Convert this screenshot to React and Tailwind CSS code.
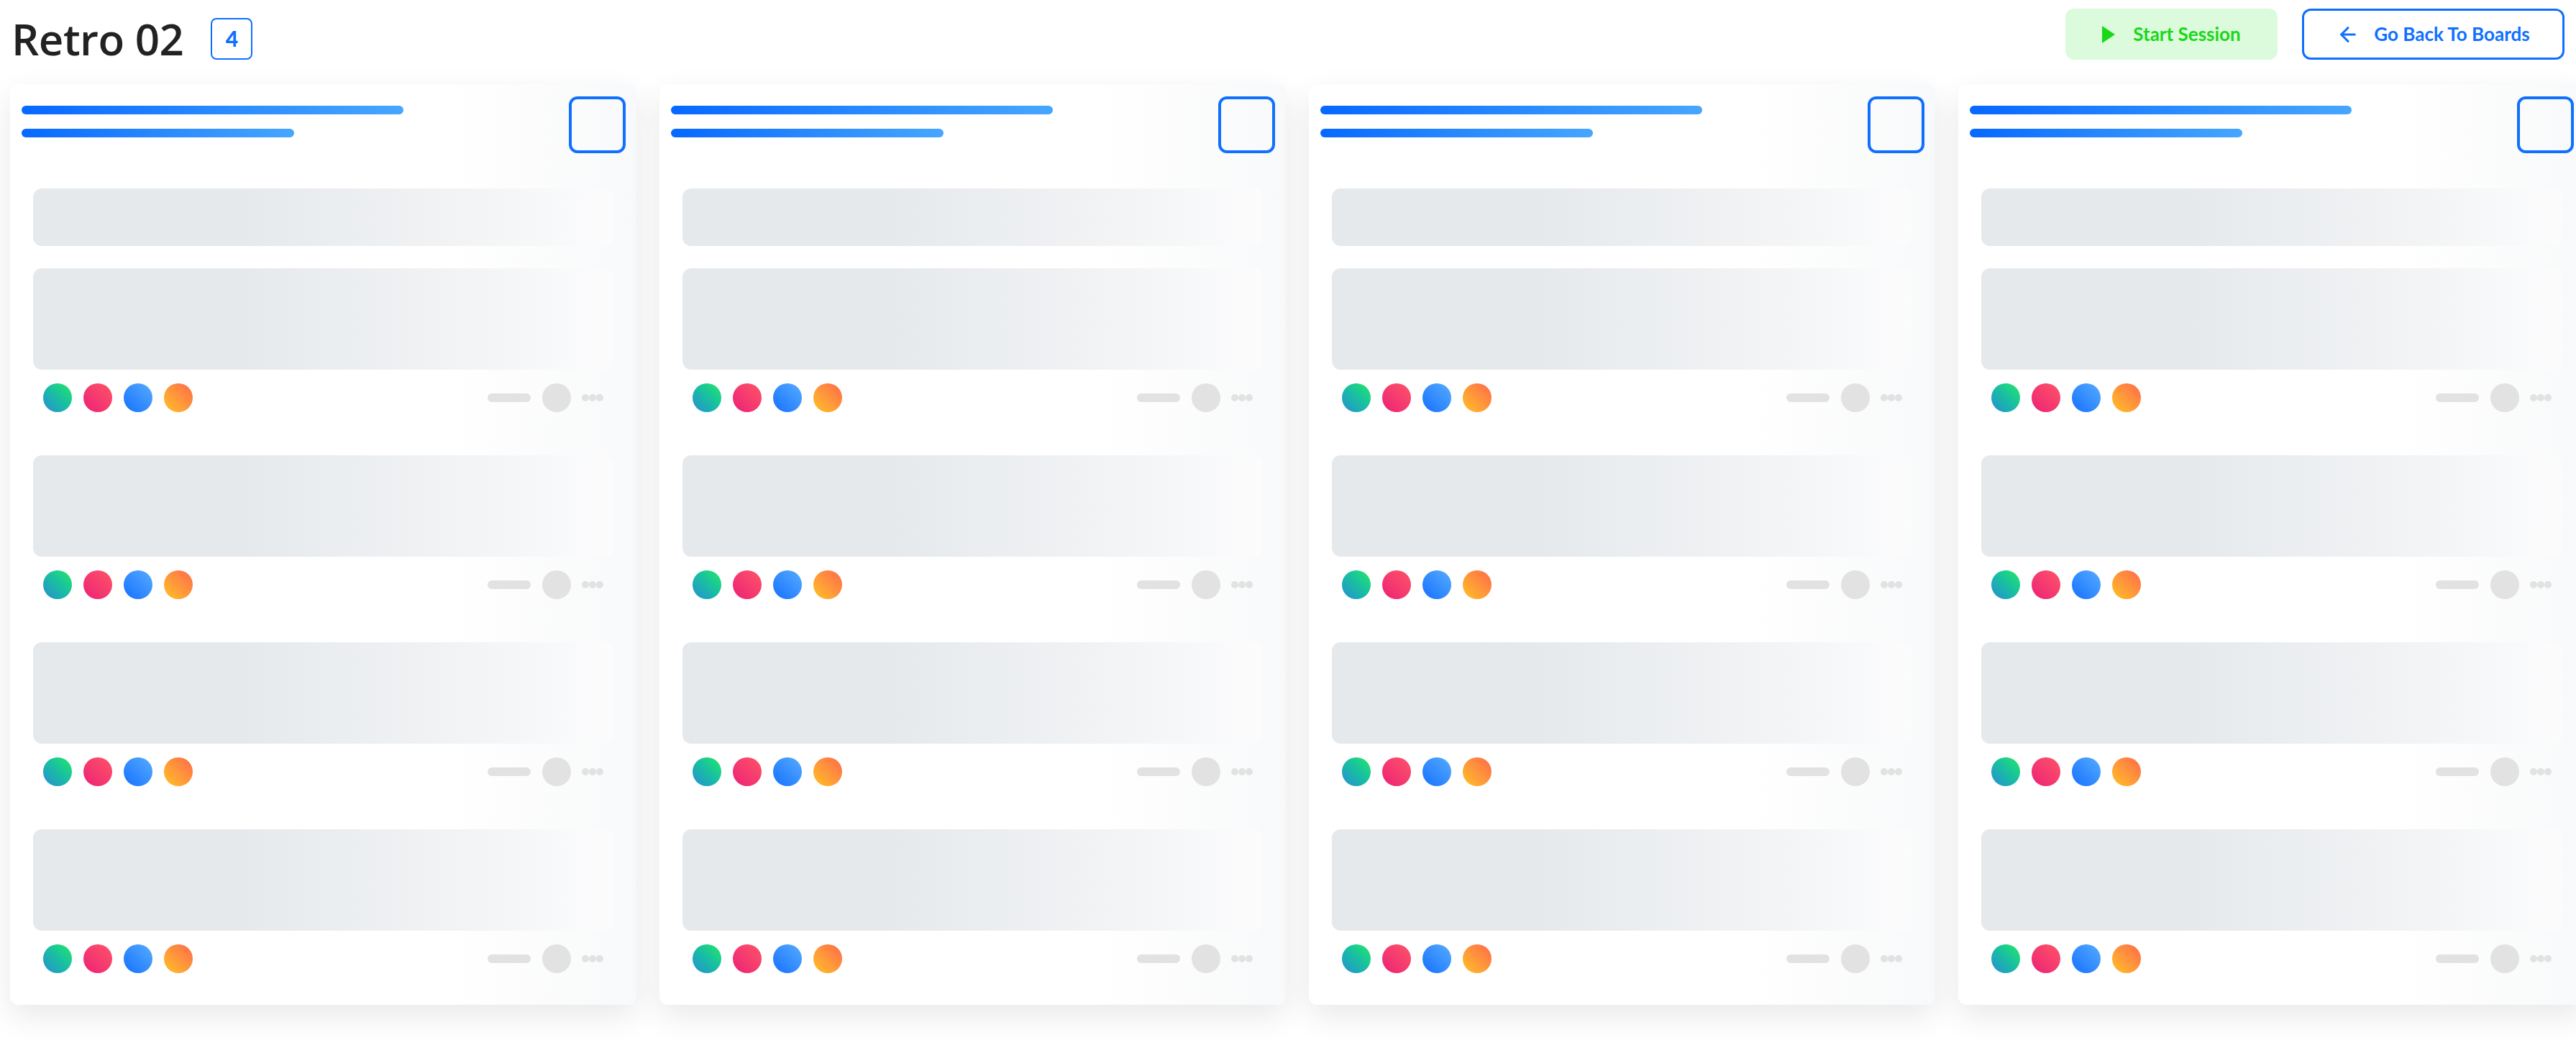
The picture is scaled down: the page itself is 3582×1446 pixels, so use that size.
import { ArrowLeft } from 'lucide-react';

const reactions = [
  'bg-linear-to-tr from-[#2a8cd0] to-[#27e85a]',
  'bg-linear-to-tr from-[#ec1a76] to-[#ff5266]',
  'bg-linear-to-tr from-[#146fff] to-[#56abff]',
  'bg-linear-to-tr from-[#ffc01c] to-[#ff6648]',
];

const block = 'rounded-xl bg-linear-to-r from-[#e6e9ec] from-35% via-[#f0f2f4] via-70% to-[#fcfcfd]';

function CardFooter() {
  return (
    <div className="mt-[19px] flex h-10 items-center justify-between px-[14px]">
      <div className="flex gap-4">
        {reactions.map((cls, j) => (
          <div key={j} className={`size-10 rounded-full ${cls}`} />
        ))}
      </div>
      <div className="flex items-center">
        <div className="h-3 w-[60px] rounded-full bg-[#e2e2e2]" />
        <div className="ml-4 size-10 rounded-full bg-[#e2e2e2]" />
        <div className="ml-[15px] flex">
          <span className="size-[10px] rounded-full bg-[#e2e2e2]" />
          <span className="size-[10px] rounded-full bg-[#e2e2e2]" />
          <span className="size-[10px] rounded-full bg-[#e2e2e2]" />
        </div>
      </div>
    </div>
  );
}

function Column() {
  return (
    <div className="w-[871px] shrink-0 rounded-xl bg-linear-to-r from-white from-70% to-[#f8f9fa] pt-[17px] pb-[44px] shadow-[0_16px_44px_rgba(0,0,0,0.09)]">
      <div className="flex items-start justify-between pl-4 pr-[15px]">
        <div className="pt-[13px]">
          <div className="h-3 w-[531px] rounded-full bg-linear-to-r from-[#0668ff] to-[#46a6ff]" />
          <div className="mt-5 h-3 w-[379px] rounded-full bg-linear-to-r from-[#0668ff] to-[#46a6ff]" />
        </div>
        <div className="size-[79px] rounded-xl border-[4px] border-[#0f70ff]" />
      </div>
      <div className="mt-[49px] px-8">
        <div className={`h-20 ${block}`} />
        <div className="mt-[31px] flex flex-col gap-[60px]">
          {[0, 1, 2, 3].map((i) => (
            <div key={i}>
              <div className={`h-[141px] ${block}`} />
              <CardFooter />
            </div>
          ))}
        </div>
      </div>
    </div>
  );
}

export default function App() {
  return (
    <div className="h-screen w-full overflow-hidden bg-white font-['Open_Sans',sans-serif]">
      <header className="flex h-[95px] items-center justify-between px-4">
        <div className="mt-3 flex items-center">
          <h1 className="text-[60px] font-semibold leading-none tracking-[-0.5px] text-[#222]">Retro 02</h1>
          <span className="ml-[38px] flex size-[58px] items-center justify-center rounded-lg border-2 border-[#0f70ff] font-['Lato',sans-serif] text-[30px] font-black text-[#0f70ff]">
            4
          </span>
        </div>
        <div className="flex items-center gap-[34px] font-['Lato',sans-serif]">
          <button className="flex h-[71px] w-[295px] items-center justify-center gap-[25px] rounded-xl bg-[#dcfbdc] text-[26px] font-bold text-[#18d818]">
            <svg width="18" height="24" viewBox="0 0 18 24">
              <path d="M0 0 L18 12 L0 24 Z" fill="#18d818" />
            </svg>
            Start Session
          </button>
          <button className="flex h-[71px] w-[365px] items-center justify-center gap-5 rounded-xl border-[3px] border-[#0f70ff] text-[26px] font-bold text-[#0f70ff]">
            <ArrowLeft size={32} strokeWidth={2.25} />
            Go Back To Boards
          </button>
        </div>
      </header>
      <div className="mt-[22px] flex gap-8 px-[14px]">
        {[0, 1, 2, 3].map((i) => (
          <Column key={i} />
        ))}
      </div>
    </div>
  );
}
